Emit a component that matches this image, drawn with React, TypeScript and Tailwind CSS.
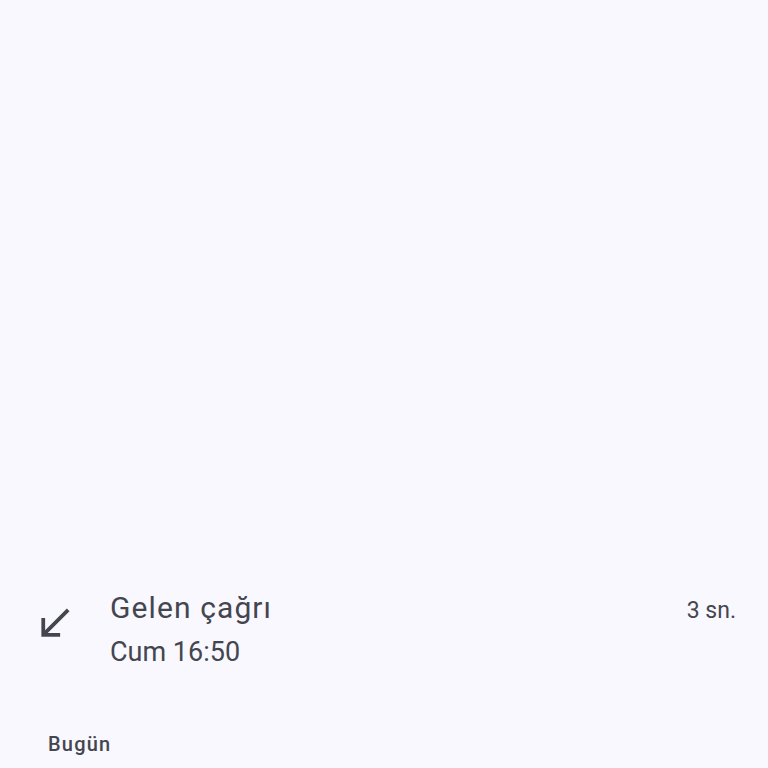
const FONT = { fontFamily: 'Roboto, "Noto Sans", sans-serif' }

function IncomingIcon() {
  return (
    <svg viewBox="0 0 24 24" className="w-[45px] h-[45px] fill-[#44464f]">
      <path d="M15 19v-2H8.41L20 5.41 18.59 4 7 15.59V9H5v10h10z" />
    </svg>
  )
}

export default function App() {
  return (
    <div className="h-[768px] overflow-hidden bg-[#f9f8fe] flex flex-col text-[#44464f]" style={FONT}>
      <div className="flex-1" />
      <div className="flex items-start pl-[32px] pr-[32px]">
        <div className="pt-[15px]">
          <IncomingIcon />
        </div>
        <div className="flex-1 pl-[33px]">
          <div className="text-[30px] leading-[44px] tracking-[1.1px]">Gelen çağrı</div>
          <div className="text-[27px] leading-[44px]">Cum 16:50</div>
        </div>
        <div className="mt-[3px] text-[23px] leading-[44px]">3 sn.</div>
      </div>
      <div className="pl-[48px] pt-[56px] pb-[10px] text-[20px] leading-[28px] font-medium tracking-[1.2px]">Bugün</div>
    </div>
  )
}
